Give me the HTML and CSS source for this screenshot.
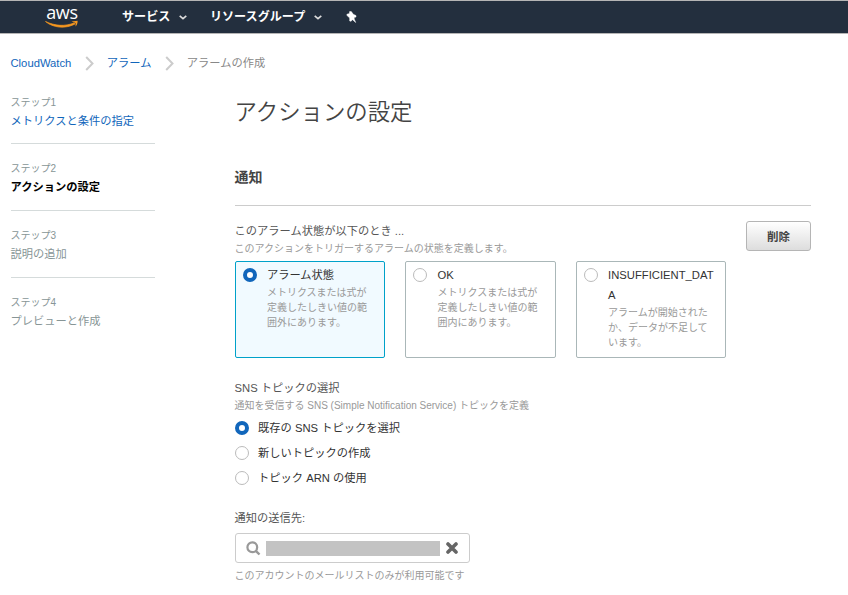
FILE: index.html
```html
<!DOCTYPE html>
<html lang="ja">
<head>
  <meta charset="UTF-8" />
  <meta name="viewport" content="width=device-width, initial-scale=1.0" />
  <title>アクションの設定</title>
  <link rel="stylesheet" href="styles.css">
</head>
<body>
  <header class="navbar">
    <div class="logo">
      <span class="logo-text">aws</span>
      <svg class="logo-smile" width="34" height="9" viewBox="0 0 34 9">
        <path d="M0.500 1.500C8 7.800 20 9.200 30 4L29 3C20 6.600 10 6 0.500 1.500Z" fill="#f7981f" stroke="#f7981f" stroke-width="0.700"/>
        <path d="M26.500 1.500L32.600 0.800C32.800 3 32 5 30.600 6.500L30.500 3Z" fill="#f7981f"/>
      </svg>
    </div>
    <a class="nav-item nav-services">サービス
      <svg class="caret" width="8" height="5" viewBox="0 0 8 5"><path d="M0.700 0.900L4 3.700L7.300 0.900" fill="none" stroke="#ddd" stroke-width="1.600"/></svg>
    </a>
    <a class="nav-item nav-groups">リソースグループ
      <svg class="caret" width="8" height="5" viewBox="0 0 8 5"><path d="M0.700 0.900L4 3.700L7.300 0.900" fill="none" stroke="#ddd" stroke-width="1.600"/></svg>
    </a>
    <svg class="pin" width="11" height="12" viewBox="0 0 11 12">
      <path d="M3.600 0.600L5.300 0.600L7.300 3.300L10 4.600L10 6L8 6.500L8.400 8.500L9.700 11.500L6.600 8.700L4.900 10.300L3.700 10L3.700 7L0.800 4.300L1 3.200L3.500 2.600Z" fill="#fff" stroke="#fff" stroke-width="0.500"/>
    </svg>
  </header>

  <nav class="breadcrumb">
    <a class="link">CloudWatch</a>
    <svg width="9" height="15" viewBox="0 0 9 15"><path d="M1.200 1L7.500 7.500L1.200 14" fill="none" stroke="#ccc" stroke-width="2"/></svg>
    <a class="link">アラーム</a>
    <svg width="9" height="15" viewBox="0 0 9 15"><path d="M1.200 1L7.500 7.500L1.200 14" fill="none" stroke="#ccc" stroke-width="2"/></svg>
    <span>アラームの作成</span>
  </nav>

  <div class="layout">
    <aside class="steps">
      <div class="step">
        <div class="step-label">ステップ1</div>
        <a class="step-name link">メトリクスと条件の指定</a>
      </div>
      <div class="step">
        <div class="step-label">ステップ2</div>
        <div class="step-name current">アクションの設定</div>
      </div>
      <div class="step">
        <div class="step-label">ステップ3</div>
        <div class="step-name">説明の追加</div>
      </div>
      <div class="step">
        <div class="step-label">ステップ4</div>
        <div class="step-name">プレビューと作成</div>
      </div>
    </aside>

    <main class="content">
      <h1>アクションの設定</h1>
      <h2>通知</h2>

      <div class="state-head">
        <div>
          <div class="label">このアラーム状態が以下のとき ...</div>
          <div class="hint">このアクションをトリガーするアラームの状態を定義します。</div>
        </div>
        <button class="btn">削除</button>
      </div>

      <div class="cards">
        <div class="card selected">
          <span class="radio checked"></span>
          <div class="card-body">
            <div class="card-title">アラーム状態</div>
            <div class="card-text">メトリクスまたは式が定義したしきい値の範囲外にあります。</div>
          </div>
        </div>
        <div class="card">
          <span class="radio"></span>
          <div class="card-body">
            <div class="card-title">OK</div>
            <div class="card-text">メトリクスまたは式が定義したしきい値の範囲内にあります。</div>
          </div>
        </div>
        <div class="card">
          <span class="radio"></span>
          <div class="card-body">
            <div class="card-title">INSUFFICIENT_DATA</div>
            <div class="card-text">アラームが開始されたか、データが不足しています。</div>
          </div>
        </div>
      </div>

      <div class="label">SNS トピックの選択</div>
      <div class="hint">通知を受信する SNS (Simple Notification Service) トピックを定義</div>
      <div class="options">
        <div class="option"><span class="radio checked"></span>既存の SNS トピックを選択</div>
        <div class="option"><span class="radio"></span>新しいトピックの作成</div>
        <div class="option"><span class="radio"></span>トピック ARN の使用</div>
      </div>

      <div class="label">通知の送信先:</div>
      <div class="search">
        <svg width="15" height="15" viewBox="0 0 15 15">
          <circle cx="6.300" cy="6.300" r="4.900" fill="none" stroke="#999" stroke-width="2.200"/>
          <path d="M9.800 9.800L13.500 13.500" stroke="#999" stroke-width="2.400"/>
        </svg>
        <span class="search-value"></span>
        <svg width="12" height="12" viewBox="0 0 12 12">
          <path d="M2 2L10 10M10 2L2 10" stroke="#666" stroke-width="3.600" stroke-linecap="round"/>
        </svg>
      </div>
      <div class="hint">このアカウントのメールリストのみが利用可能です</div>
    </main>
  </div>
</body>
</html>
```
FILE: styles.css
```css
* {
  box-sizing: border-box;
}

body {
  margin: 0;
  height: 595px;
  overflow: hidden;
  background: #fff;
  color: #444;
  font-family: "Liberation Sans", "Noto Sans CJK JP", sans-serif;
  font-size: 11.25px;
  line-height: 20px;
}

svg {
  display: block;
  flex: none;
}

.navbar {
  display: flex;
  align-items: center;
  height: 34px;
  padding-left: 45px;
  background: #232f3e;
  border-top: 1px solid #b5b5b5;
  border-bottom: 1px solid #b5b5b5;
}

.logo {
  width: 34px;
  height: 26px;
  margin-right: 43px;
}

.logo-text {
  display: block;
  height: 16px;
  color: #fff;
  font-family: "Open Sans", sans-serif;
  font-size: 18px;
  font-weight: 500;
  line-height: 16px;
  letter-spacing: -0.3px;
  text-align: center;
}

.nav-item {
  display: flex;
  align-items: center;
  gap: 9px;
  color: #fff;
  font-size: 12.1px;
  font-weight: bold;
}

.nav-groups {
  margin: 0 24px 0 22.5px;
}

.caret {
  margin-top: 1px;
}

.breadcrumb {
  display: flex;
  align-items: center;
  gap: 13.2px;
  padding: 19px 0 0 10.5px;
  color: #888;
}

.link {
  color: #1166bb;
}

.layout {
  display: flex;
  gap: 80px;
  padding-left: 10.5px;
}

.steps {
  width: 144px;
  padding-top: 21.6px;
  color: #879596;
}

.step {
  height: 66.8px;
}

.step:not(:last-child)::after {
  content: "";
  display: block;
  height: 1px;
  margin-top: 12.4px;
  background: #d5dbdb;
}

.step-label {
  font-size: 10px;
  line-height: 16px;
}

.step-name {
  display: block;
  line-height: 20px;
}

.step-name.current {
  color: #000;
  font-weight: bold;
}

.content {
  width: 576.5px;
  padding-top: 23px;
}

h1 {
  margin: 0 0 39px;
  font-size: 22.4px;
  font-weight: 350;
  line-height: 34px;
}

h2 {
  height: 37px;
  margin: 0;
  border-bottom: 1px solid #ccc;
  font-size: 14px;
  font-weight: bold;
  line-height: 16px;
}

.state-head {
  display: flex;
  justify-content: space-between;
  height: 55px;
  padding-top: 15px;
}

.label {
  color: #555;
}

.hint {
  color: #999;
  font-size: 10px;
  line-height: 15px;
}

.btn {
  width: 65px;
  height: 30px;
  padding: 0;
  border: 1px solid #b5b5b5;
  border-radius: 3px;
  background: linear-gradient(#fff, #ddd);
  color: #444;
  font-family: inherit;
  font-size: 11.5px;
  font-weight: bold;
}

.cards {
  display: flex;
  gap: 20px;
  margin-bottom: 20px;
}

.card {
  display: flex;
  gap: 10.4px;
  width: 150.6px;
  height: 97px;
  padding: 3px 10px 0 7px;
  border: 1px solid #aab7b8;
  border-radius: 2px;
}

.card.selected {
  border-color: #00a1c9;
  background: #f1faff;
}

.card .radio {
  margin-top: 3px;
}

.card-body {
  width: 108px;
}

.card-title {
  color: #333;
  overflow-wrap: anywhere;
}

.card-text {
  width: 102px;
  color: #999;
  font-size: 10px;
  line-height: 15px;
}

.radio {
  flex: none;
  width: 14px;
  height: 14px;
  border: 1px solid #bbb;
  border-radius: 50%;
  background: #fff;
}

.radio.checked {
  border: 4px solid #1166bb;
}

.options {
  margin: 2px 0 18px;
}

.option {
  display: flex;
  align-items: center;
  gap: 9.6px;
  height: 25px;
  color: #333;
}

.search {
  display: flex;
  align-items: center;
  width: 235px;
  height: 30px;
  margin: 5px 0;
  padding-left: 10px;
  border: 1px solid #ccc;
  border-radius: 3px;
}

.search-value {
  width: 174px;
  height: 15px;
  margin: 0 6px 0 5px;
  background: #c3c3c3;
}
```
